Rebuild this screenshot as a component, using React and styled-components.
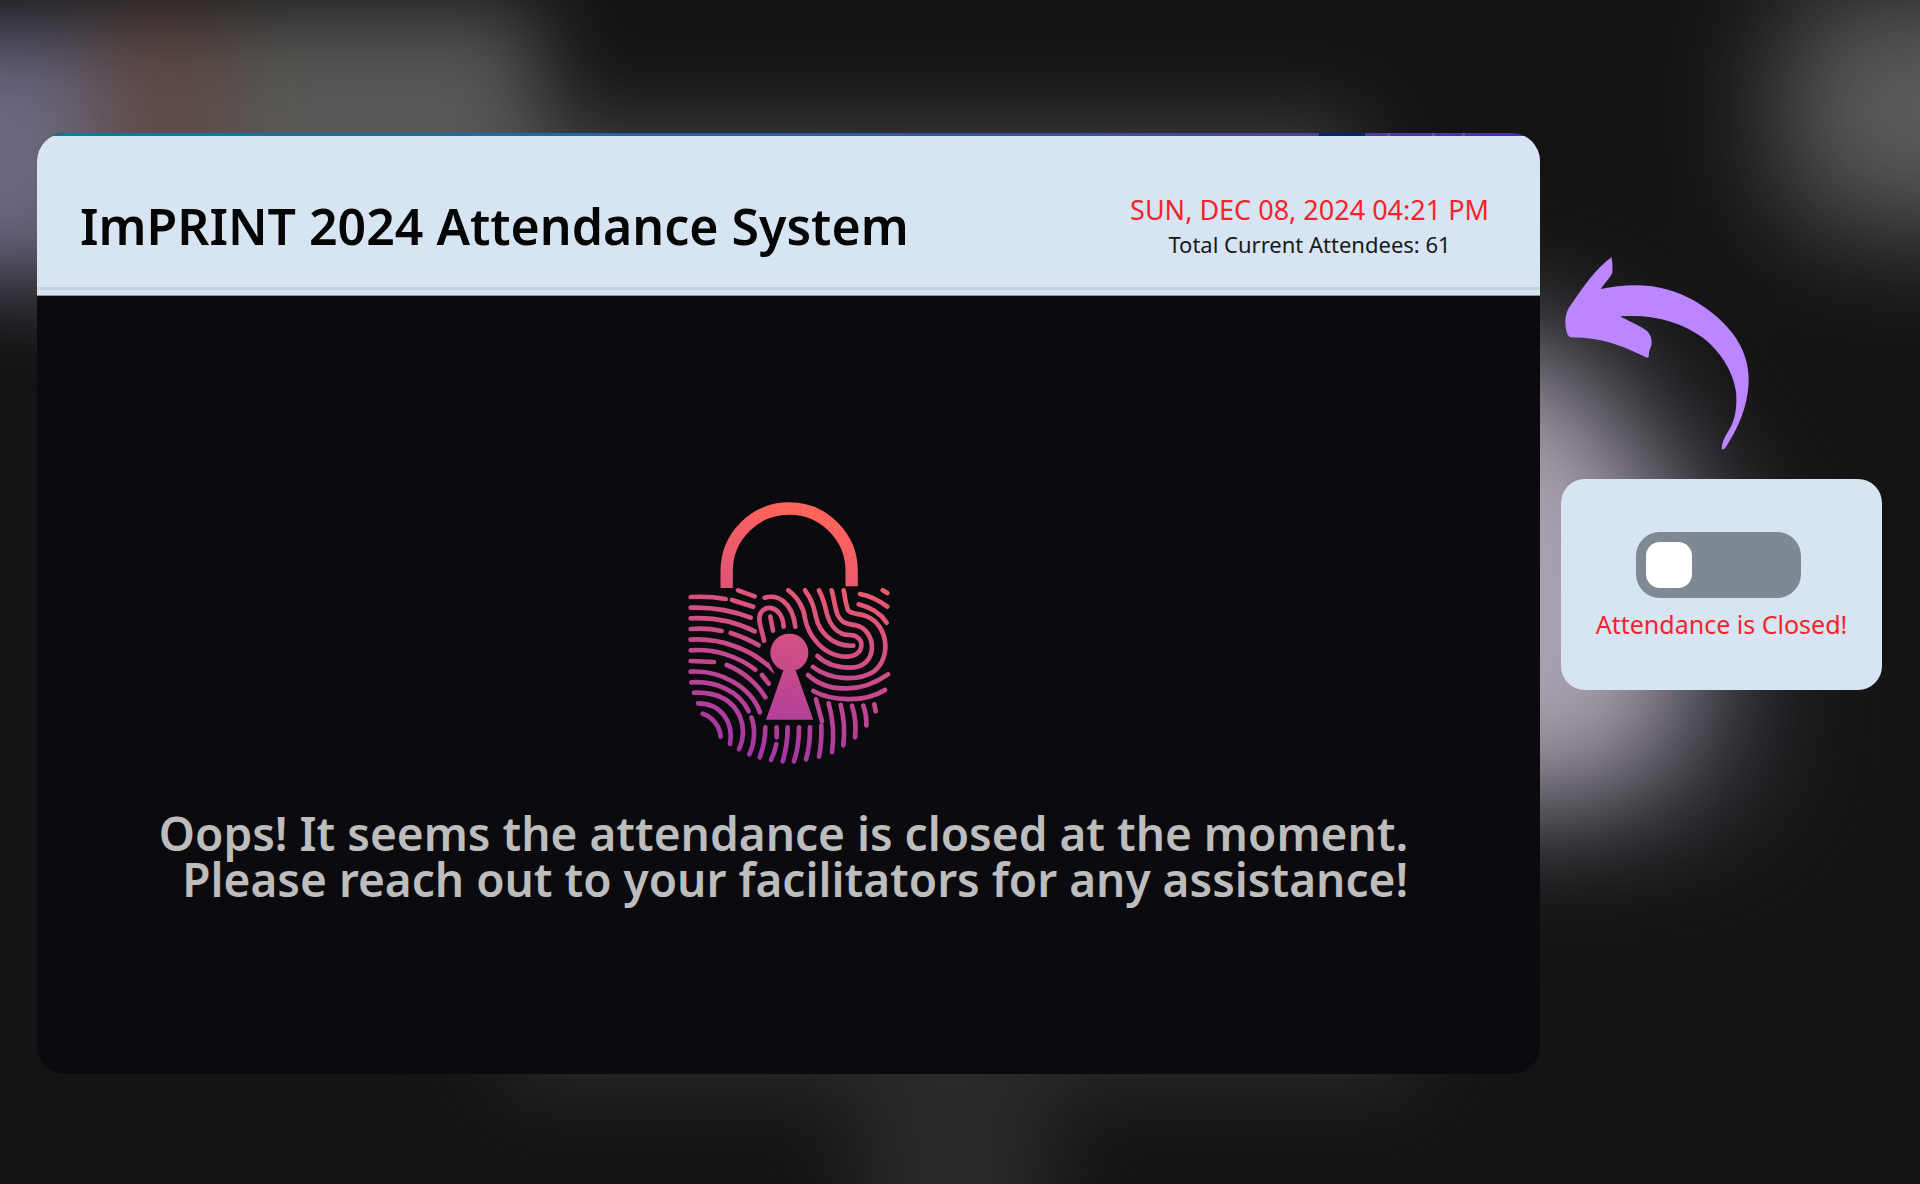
import React, { useState } from 'react';
import styled, { createGlobalStyle } from 'styled-components';

const GlobalStyle = createGlobalStyle`
  * { box-sizing: border-box; }
  body {
    margin: 0;
    background: #141414;
    font-family: "Noto Sans", "Open Sans", sans-serif;
  }
`;

const Page = styled.div`
  position: relative;
  z-index: 0;
  min-height: 100vh;
  display: flex;
  align-items: flex-start;
  gap: 21px;
  padding: 133px 38px 110px 37px;
`;

const Backdrop = styled.svg`
  position: absolute;
  inset: 0;
  z-index: -1;
  width: 100%;
  height: 100%;
`;

const Screen = styled.main`
  flex: 1;
  min-width: 0;
  overflow: hidden;
  border-radius: 28px;
  background: #0b0a0f;
`;

const Strip = styled.div`
  height: 3px;
  background:
    linear-gradient(#06266b, #06266b) 88% 0 / 46px 3px no-repeat,
    linear-gradient(#6350b8, #6350b8) 90% 0 / 3px 3px no-repeat,
    linear-gradient(#6350b8, #6350b8) 93% 0 / 3px 3px no-repeat,
    linear-gradient(#6350b8, #6350b8) 95% 0 / 3px 3px no-repeat,
    linear-gradient(90deg, #0f7b9c, #2c5fa8 50%, #4a40a8 85%, #4b2fa6);
`;

const Header = styled.header`
  display: flex;
  align-items: center;
  justify-content: space-between;
  gap: 24px;
  height: 160px;
  padding: 21px 51px 0 43px;
  background: linear-gradient(#c8d2dc, #c8d2dc) 0 151px / 100% 3px no-repeat, #d7e4f1;
  border-bottom: 1px solid #8b949d;
`;

const Title = styled.h1`
  margin: 0;
  font-size: 50px;
  line-height: 60px;
  font-weight: 600;
  color: #050505;
`;

const Status = styled.div`
  display: flex;
  flex-direction: column;
  align-items: center;
`;

const Clock = styled.p`
  margin: 0;
  font-size: 27px;
  line-height: 36px;
  color: #f7232b;
`;

const Total = styled.p`
  margin: 0;
  font-size: 22px;
  line-height: 33px;
  color: #16181c;
`;

const Closed = styled.section`
  display: flex;
  flex-direction: column;
  align-items: center;
  gap: 46px;
  padding: 204px 24px 172px;
`;

const Message = styled.div`
  display: flex;
  flex-direction: column;
  align-items: flex-end;
  padding-right: 10px;
`;

const Line = styled.p`
  margin: 0;
  font-size: 46px;
  line-height: 46px;
  font-weight: 600;
  color: #bdbdbd;
`;

const Side = styled.aside`
  flex: none;
  display: flex;
  flex-direction: column;
  gap: 24px;
  width: 321px;
  padding-top: 122px;
`;

const Arrow = styled.svg`
  width: 240px;
  height: 200px;
`;

const SwitchCard = styled.label`
  display: flex;
  flex-direction: column;
  align-items: center;
  gap: 8px;
  padding: 53px 0 48px;
  border-radius: 24px;
  background: #d7e4f1;
`;

const Toggle = styled.input`
  appearance: none;
  display: flex;
  align-items: center;
  width: 165px;
  height: 66px;
  margin: 0 6px 0 0;
  padding: 0 10px;
  border-radius: 24px;
  background: #7e8994;
  cursor: pointer;

  &::before {
    content: "";
    width: 46px;
    height: 46px;
    border-radius: 14px;
    background: #fff;
  }

  &:checked {
    justify-content: flex-end;
  }
`;

const SwitchText = styled.span`
  font-size: 25px;
  line-height: 36px;
  color: #f7232b;
`;

const ridges = [
  'M60 321Q115 318 165 327', 'M202 301L252 319', 'M184 330L248 350',
  'M60 353Q155 350 240 383', 'M60 385Q165 380 252 424',
  'M60 417Q110 413 153 423', 'M180 429Q225 443 264 466',
  'M60 449C150 443 240 480 290 525', 'M60 481C130 475 200 498 254 539', 'M274 555L294 581',
  'M60 513L130 516', 'M168 525C220 545 262 585 284 622',
  'M60 545C150 540 240 590 268 667', 'M62 577C130 573 205 600 234 664',
  'M242 682C255 715 252 760 236 793',
  'M70 608C150 605 190 640 208 680C222 715 218 750 205 778',
  'M82 640C150 640 190 695 178 762', 'M96 671C125 680 148 710 150 740',
  'M282 323C320 312 365 335 374 410',
  'M280 452C274 420 266 405 266 385C268 340 335 340 339 410', 'M299 380L307 422',
  'M403 301C425 330 430 355 437 385C445 420 480 470 548 467',
  'M353 301C380 320 400 355 403 385C410 425 450 500 530 500C585 498 585 436 538 435C500 434 478 405 469 372C463 345 455 320 445 301',
  'M483 301C490 325 492 350 500 372C512 402 535 402 555 406C620 420 625 532 540 533C500 533 465 522 440 498',
  'M519 301C524 325 525 345 533 362C545 374 570 370 590 380C650 405 665 500 610 544C560 577 475 568 427 531',
  'M412 555C450 590 490 597 530 595C580 595 620 575 652 553',
  'M428 603C480 632 580 640 643 600',
  'M568 312C600 318 630 335 650 350', 'M564 343C600 352 630 370 648 398', 'M636 301L650 309',
  'M436 628L454 694', 'M474 640C488 690 490 745 484 786', 'M510 645C522 690 522 730 518 766',
  'M544 647C555 680 556 715 553 742', 'M578 647C586 670 588 690 587 706', 'M611 643L615 664',
  'M284 712C284 745 278 775 267 802', 'M318 712V742', 'M317 762C313 782 307 798 301 810',
  'M351 712C351 750 345 785 336 814', 'M385 712C385 750 380 785 370 814',
  'M418 712C418 750 415 780 406 808', 'M452 706C453 740 451 770 445 800',
];

function LockIcon() {
  return (
    <svg width="206" height="264" viewBox="46 30 618 792" fill="none" aria-hidden="true">
      <defs>
        <linearGradient id="lockFill" gradientUnits="userSpaceOnUse" x1="470" y1="90" x2="260" y2="820">
          <stop offset="0" stopColor="#ff635a" />
          <stop offset="0.5" stopColor="#d15084" />
          <stop offset="1" stopColor="#9f34a4" />
        </linearGradient>
      </defs>
      <g stroke="url(#lockFill)">
        <path strokeWidth="37" d="M168 294V243A187 187 0 0 1 543 243V289" />
        <g strokeWidth="14" strokeLinecap="round" strokeLinejoin="round">
          {ridges.map((d) => <path key={d} d={d} />)}
        </g>
      </g>
      <path
        fill="url(#lockFill)"
        d="M286 689L338 541C315 533 299 512 299 488A57 57 0 0 1 413 488C413 512 398 533 375 541L428 689Z"
      />
      <path fill="url(#lockFill)" d="M284 526L294 517Q305 535 312 553Q298 543 284 526Z" />
    </svg>
  );
}

function CurvedArrow() {
  return (
    <Arrow viewBox="63 45 720 600" aria-hidden="true">
      <path
        fill="#bb86ff"
        d="M214 52C218 65 218 83 217 98C210 114 193 130 182 147C250 132 325 131 384 149C465 172 535 225 577 279C612 325 628 375 626 430C622 500 596 560 568 604C560 618 552 632 546 628C544 612 553 592 565 574C586 540 592 500 588 455C578 390 540 335 490 294C420 245 345 222 240 229C265 243 291 253 320 272C333 283 337 302 334 317C328 330 326 337 326 351C322 356 316 351 310 348C260 323 200 298 130 293L92 292C79 288 76 262 76 241C78 214 87 201 99 185C135 135 165 88 214 52Z"
      />
    </Arrow>
  );
}

function BlurredScene() {
  return (
    <Backdrop viewBox="0 0 1920 1184" preserveAspectRatio="none" aria-hidden="true">
      <defs>
        <filter id="soft" filterUnits="userSpaceOnUse" x="-400" y="-400" width="2800" height="2000" colorInterpolationFilters="sRGB">
          <feGaussianBlur stdDeviation="44" />
        </filter>
        <filter id="softer" filterUnits="userSpaceOnUse" x="-400" y="-400" width="2800" height="2000" colorInterpolationFilters="sRGB">
          <feGaussianBlur stdDeviation="60" />
        </filter>
      </defs>
      <rect width="1920" height="1184" fill="#141414" />
      <g filter="url(#soft)">
        <rect x="420" y="120" width="940" height="160" fill="#404042" />
        <rect x="230" y="10" width="310" height="290" fill="#575957" />
        <rect x="85" y="10" width="150" height="290" fill="#5f4b47" />
        <rect x="-160" y="30" width="250" height="250" fill="#6a6982" />
        <rect x="500" y="900" width="920" height="190" fill="#2a2a2a" />
        <rect x="860" y="1040" width="190" height="240" fill="#2a2a2a" />
      </g>
      <g filter="url(#softer)">
        <rect x="1780" y="-10" width="320" height="240" rx="70" fill="#5c5c5c" />
        <path fill="#2a2930" d="M1200 300H1600L1780 540V800L1700 840H1200Z" />
        <path fill="#a8a1af" d="M1200 350H1530C1580 385 1630 440 1685 530V710Q1660 790 1590 800H1200Z" />
      </g>
    </Backdrop>
  );
}

export default function App() {
  const [open, setOpen] = useState(false);
  return (
    <>
      <GlobalStyle />
      <Page>
        <BlurredScene />
        <Screen>
          <Strip />
          <Header>
            <Title>ImPRINT 2024 Attendance System</Title>
            <Status>
              <Clock>SUN, DEC 08, 2024 04:21 PM</Clock>
              <Total>Total Current Attendees: 61</Total>
            </Status>
          </Header>
          <Closed>
            <LockIcon />
            <Message>
              <Line>Oops! It seems the attendance is closed at the moment.</Line>
              <Line>Please reach out to your facilitators for any assistance!</Line>
            </Message>
          </Closed>
        </Screen>
        <Side>
          <CurvedArrow />
          <SwitchCard>
            <Toggle
              type="checkbox"
              role="switch"
              checked={open}
              onChange={(event) => setOpen(event.target.checked)}
            />
            <SwitchText>Attendance is Closed!</SwitchText>
          </SwitchCard>
        </Side>
      </Page>
    </>
  );
}
